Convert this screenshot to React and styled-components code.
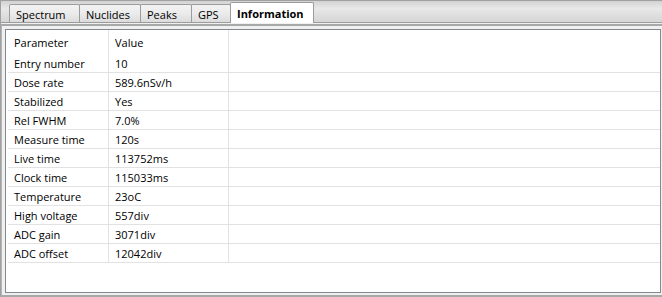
import React from "react";
import styled, { createGlobalStyle } from "styled-components";

const GlobalStyle = createGlobalStyle`
    html, body {
        margin: 0;
        padding: 0;
        background: #f0f0f0;
    }
    body {
        font-family: "Open Sans", "Noto Sans", sans-serif;
        font-size: 11px;
        color: #000;
    }
`

const tabs = [
    { name: "Spectrum", width: 71 },
    { name: "Nuclides", width: 62 },
    { name: "Peaks", width: 52 },
    { name: "GPS", width: 40 },
    { name: "Information", width: 84, active: true },
]

const rows = [
    ["Entry number", "10"],
    ["Dose rate", "589.6nSv/h"],
    ["Stabilized", "Yes"],
    ["Rel FWHM", "7.0%"],
    ["Measure time", "120s"],
    ["Live time", "113752ms"],
    ["Clock time", "115033ms"],
    ["Temperature", "23oC"],
    ["High voltage", "557div"],
    ["ADC gain", "3071div"],
    ["ADC offset", "12042div"],
]

const App = () => {
    return (
        <>
            <GlobalStyle />
            <Window>
                <TabBar>
                    {tabs.map(tab => (
                        <Tab key={tab.name} width={tab.width} $active={tab.active}>
                            {tab.name}
                        </Tab>
                    ))}
                </TabBar>
                <Pane>
                    <Frame>
                        <ListView>
                            <Row $header>
                                <Cell $w={101}>Parameter</Cell>
                                <Cell $w={120}>Value</Cell>
                                <Filler />
                            </Row>
                            {rows.map(row => (
                                <Row key={row[0]}>
                                    <Cell $w={101}>{row[0]}</Cell>
                                    <Cell $w={120}>{row[1]}</Cell>
                                    <Filler />
                                </Row>
                            ))}
                        </ListView>
                    </Frame>
                </Pane>
            </Window>
        </>
    )
}

const Window = styled.div`
    width: 662px;
    height: 297px;
    box-sizing: border-box;
    border-left: 1px solid #a0a0a0;
    border-top: 1px solid #a0a0a0;
    display: flex;
    flex-direction: column;
    overflow: hidden;
    background: #f0f0f0;
`
const TabBar = styled.div`
    height: 22px;
    box-sizing: border-box;
    display: flex;
    align-items: flex-end;
    padding-left: 8px;
    border-bottom: 1px solid #9c9c9c;
    background: linear-gradient(to bottom, #d2d2d2 0%, #e8e8e8 35%, #dedede 70%, #d6d6d6 100%);
`
const Tab = styled.div`
    width: ${props => props.width}px;
    height: ${props => props.$active ? 21 : 18}px;
    margin-bottom: ${props => props.$active ? -1 : 0}px;
    margin-left: -1px;
    box-sizing: border-box;
    padding: 1px 0 0 6px;
    display: flex;
    align-items: center;
    border: 1px solid #9c9c9c;
    border-bottom: none;
    border-radius: 2px 2px 0 0;
    background: ${props => props.$active
        ? "#ffffff"
        : "linear-gradient(to bottom, #f3f3f3 0%, #ebebeb 50%, #dcdcdc 100%)"};
    font-weight: ${props => props.$active ? 700 : 400};
    white-space: nowrap;
    position: relative;
    z-index: ${props => props.$active ? 2 : 1};

    &:first-child {
        margin-left: 0;
    }
`
const Pane = styled.div`
    flex: 1;
    padding-top: 1px;
    display: flex;
    flex-direction: column;
`
const Frame = styled.div`
    flex: 1;
    border-top: 2px solid #a8a8a8;
    border-bottom: 2px solid #a8a8a8;
    border-left: 1px solid #b4b4b4;
    padding: 3px 0 2px 3px;
    display: flex;
    flex-direction: column;
`
const ListView = styled.div`
    flex: 1;
    background: #ffffff;
    border: 1px solid #828790;
    padding-left: 2px;
    margin-right: 1px;
`
const Row = styled.div`
    display: flex;
    height: ${props => props.$header ? 24 : 19}px;
    box-sizing: border-box;
    border-bottom: ${props => props.$header ? "none" : "1px solid #e2e2e2"};
`
const Cell = styled.div`
    width: ${props => props.$w}px;
    flex-shrink: 0;
    box-sizing: border-box;
    border-right: 1px solid #e2e2e2;
    padding-left: 6px;
    display: flex;
    align-items: center;
    white-space: nowrap;
`
const Filler = styled.div`
    flex: 1;
`

export default App;
